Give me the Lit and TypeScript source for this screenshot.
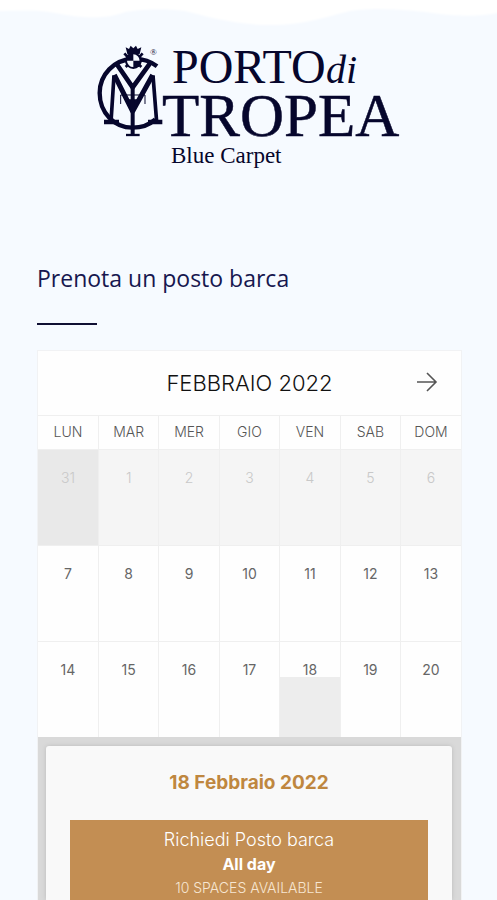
import { LitElement, html, css, svg } from "lit";
import { customElement, property, state } from "lit/decorators.js";
import { classMap } from "lit/directives/class-map.js";

@customElement("porto-logo")
class PortoLogo extends LitElement {
  static styles = css`
    :host { display: block; }
    svg { display: block; width: 100%; overflow: visible; }
    text { font-family: "Liberation Serif", serif; fill: #06062c; }
    .porto { font-size: 48px; }
    .di { font-size: 40px; font-style: italic; }
    .tropea { font-size: 61px; stroke: #06062c; stroke-width: 0.5; }
    .tagline { font-size: 23px; }
    .mark { font-size: 9px; }
    .ink { stroke: #06062c; fill: none; }
    .solid { fill: #06062c; }
    .paper { fill: #f6faff; }
  `;

  render() {
    return html`
      <svg viewBox="0 0 308 130" role="img" aria-label="Porto di Tropea Blue Carpet">
        ${svg`
          <g transform="translate(-5 -2) scale(0.3333)">
            <path class="ink" stroke-width="13" d="M201 79 C178 61 151 55 125 57 C73 60 29 103 29 159 C29 218 73 263 127 263 C155 263 179 254 196 238" />
            <path class="ink" stroke-width="11" d="M72 106 L63 246 M189 106 L200 246" />
            <path class="ink" stroke-width="15" stroke-linejoin="bevel" d="M73 105 L128 214 L188 105" />
            <path class="solid" d="M112 178 H145 L130 228 H125 Z" />
            <path class="ink" stroke-width="13" d="M42 246 H87 M174 246 H217" />
            <path class="ink" stroke-width="14" d="M80 72 L128 142 L180 70" />
            <path class="ink" stroke-width="12" d="M128 140 V284" />
            <path class="ink" stroke-width="7" d="M108 285 H149" />
            <path class="ink" stroke-width="3" d="M92 192 V165 H165 V192" />
            <circle class="solid" cx="130" cy="62" r="25" />
            <path class="paper" d="M130 43 A19 19 0 0 1 149 62 H130 Z M130 62 V81 A19 19 0 0 1 111 62 Z" />
            <path class="solid" d="M107 22 L117 27 L122 17 L130 25 L138 17 L143 27 L154 22 L149 42 H112 Z" />
            <path class="ink" stroke-width="8" d="M103 40 L112 50 M158 40 L149 50 M101 58 L110 64 M160 58 L151 64 M107 81 L114 74 M154 81 L147 74" />
          </g>
          <text class="mark" x="55" y="13">®</text>
          <text class="porto" x="77" y="41">PORTO</text>
          <text class="di" x="231" y="41">di</text>
          <text class="tropea" x="67" y="94">TROPEA</text>
          <text class="tagline" x="76" y="121">Blue Carpet</text>
        `}
      </svg>
    `;
  }
}

interface Slot {
  name: string;
  time: string;
  spaces: string;
}

@customElement("day-panel")
class DayPanel extends LitElement {
  @property() heading = "";
  @property({ attribute: false }) slots: Slot[] = [];

  static styles = css`
    :host { display: block; background: #d9d9d9; padding: 9px 9px 0 8px; }
    .sheet {
      background: #f9f9f9;
      border-radius: 3px 3px 0 0;
      box-shadow: 0 0 4px #bbb;
      padding: 25px 24px 0;
      text-align: center;
    }
    h3 { margin: 0 0 25px; font-size: 19px; line-height: 24px; font-weight: 700; color: #bf873f; }
    button {
      display: block;
      width: 100%;
      border: 0;
      padding: 8px 0 0;
      background: #c38e53;
      color: #fff;
      font: inherit;
      line-height: 24px;
      cursor: pointer;
    }
    span { display: block; }
    .name { font-size: 18px; font-weight: 300; }
    .time { font-size: 16px; font-weight: 700; }
    .spaces { font-size: 14px; font-weight: 300; color: #f7e6d2; }
  `;

  render() {
    return html`
      <div class="sheet">
        <h3>${this.heading}</h3>
        ${this.slots.map(
          (s) => html`<button type="button">
            <span class="name">${s.name}</span>
            <span class="time">${s.time}</span>
            <span class="spaces">${s.spaces}</span>
          </button>`
        )}
      </div>
    `;
  }
}

@customElement("booking-calendar")
class BookingCalendar extends LitElement {
  @state() private selected = 18;

  private weekdays = ["LUN", "MAR", "MER", "GIO", "VEN", "SAB", "DOM"];
  private weeks = [
    [31, 1, 2, 3, 4, 5, 6],
    [7, 8, 9, 10, 11, 12, 13],
    [14, 15, 16, 17, 18, 19, 20],
  ];

  static styles = css`
    :host { display: block; background: #fefefe; border: 1px solid #f1f2f4; border-bottom: 0; }
    header { display: grid; grid-template-columns: 68px 1fr 68px; align-items: center; height: 64px; }
    h2 { grid-column: 2; margin: 0; text-align: center; font-size: 22px; line-height: 24px; font-weight: 300; color: #111; }
    .next { justify-self: center; display: block; padding: 4px; border: 0; background: none; cursor: pointer; }
    .next svg { display: block; }
    table { width: 100%; table-layout: fixed; border-collapse: collapse; }
    th, td { padding: 0; border: 1px solid #efefef; }
    th:first-child, td:first-child { border-left: 0; }
    th:last-child, td:last-child { border-right: 0; }
    th { height: 31px; padding-bottom: 2px; font-size: 14px; font-weight: 300; color: #555; }
    td { height: 95px; }
    tbody tr:last-child td { border-bottom: 0; }
    .day {
      display: flex;
      justify-content: center;
      width: 100%;
      height: 95px;
      padding: 17px 0 0;
      border: 0;
      background: none;
      font: inherit;
      font-size: 14px;
      line-height: 22px;
      color: #666;
      cursor: pointer;
    }
    .past { background: #f5f5f5; color: #c8c8c8; font-weight: 300; cursor: default; }
    .outside { background: #e9e9e9; }
    .selected { background: linear-gradient(transparent 35px, #ededed 35px); }
  `;

  render() {
    return html`
      <header>
        <h2>FEBBRAIO 2022</h2>
        <button class="next" type="button" aria-label="Mese successivo">
          <svg width="22" height="22" viewBox="0 0 22 22" fill="none" stroke="#555" stroke-width="1.6">
            <path d="M1 10 H20 M11 1 L20 10 L11 19" />
          </svg>
        </button>
      </header>
      <table>
        <thead>
          <tr>${this.weekdays.map((d) => html`<th scope="col">${d}</th>`)}</tr>
        </thead>
        <tbody>
          ${this.weeks.map(
            (week, row) => html`<tr>
              ${week.map(
                (d, col) => html`<td>
                  <button
                    type="button"
                    ?disabled=${row === 0}
                    class=${classMap({
                      day: true,
                      past: row === 0,
                      outside: row === 0 && col === 0,
                      selected: row > 0 && d === this.selected,
                    })}
                    @click=${() => (this.selected = d)}
                  >${d}</button>
                </td>`
              )}
            </tr>`
          )}
        </tbody>
      </table>
      <day-panel
        .heading=${`${this.selected} Febbraio 2022`}
        .slots=${[{ name: "Richiedi Posto barca", time: "All day", spaces: "10 SPACES AVAILABLE" }]}
      ></day-panel>
    `;
  }
}

@customElement("app-root")
class AppRoot extends LitElement {
  static styles = css`
    :host {
      display: block;
      min-height: 100vh;
      background: #f6faff;
      font-family: Inter, "Open Sans", sans-serif;
    }
    .wave { display: block; width: 100%; height: 42px; }
    .wave path { fill: #fff; filter: blur(1px); }
    porto-logo { max-width: 308px; margin: 0 auto; }
    main { padding: 88px 35px 0 37px; }
    h1 { margin: 0; font-family: "Open Sans", sans-serif; font-size: 23px; line-height: 36px; font-weight: 400; color: #17174f; }
    .rule { width: 60px; height: 2px; margin: 27px 0 25px; border: 0; background: #100f33; }
  `;

  render() {
    return html`
      <svg class="wave" viewBox="0 0 497 42" preserveAspectRatio="none" aria-hidden="true">
        <path d="M-5 -5 H502 V12 C480 17 460 16 440 14 C410 10 380 7 350 11 C325 17 305 25 270 25 C235 25 205 16 185 11 C165 8 140 9 125 12 C105 20 80 18 55 13 C35 9 15 11 -5 11 Z" />
      </svg>
      <porto-logo></porto-logo>
      <main>
        <h1>Prenota un posto barca</h1>
        <hr class="rule" />
        <booking-calendar></booking-calendar>
      </main>
    `;
  }
}
